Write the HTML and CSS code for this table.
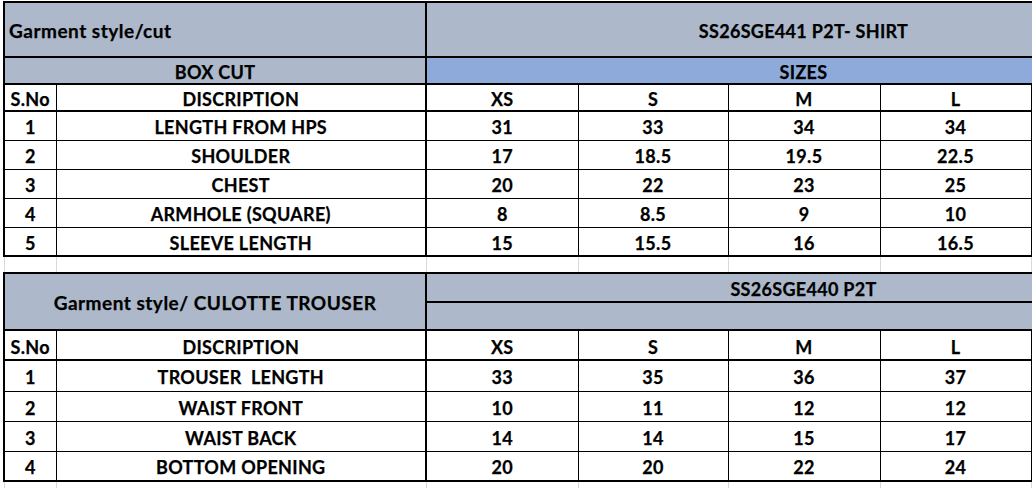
FILE: index.html
```html
<!DOCTYPE html>
<html lang="en">
<head>
<meta charset="utf-8">
<title>Garment measurement sheet</title>
<link rel="stylesheet" href="styles.css">
</head>
<body>
<div class="sheet">
<table class="grid">
  <colgroup>
    <col class="c-sno"><col class="c-desc"><col class="c-xs"><col class="c-s"><col class="c-m"><col class="c-l"><col class="c-ext">
  </colgroup>
  <tbody>
    <tr class="r-title">
      <td colspan="2" class="hd left title">Garment style/cut</td>
      <td colspan="5" class="hd split">SS26SGE441 P2T- SHIRT</td>
    </tr>
    <tr class="r-sub">
      <td colspan="2" class="hd">BOX CUT</td>
      <td colspan="5" class="hd split sizes">SIZES</td>
    </tr>
    <tr class="r-col colhead">
      <td>S.No</td><td>DISCRIPTION</td><td class="split">XS</td><td>S</td><td>M</td><td>L</td><td class="ext"></td>
    </tr>
    <tr class="r-d1"><td>1</td><td>LENGTH FROM HPS</td><td class="split">31</td><td>33</td><td>34</td><td>34</td><td class="ext"></td></tr>
    <tr class="r-d1"><td>2</td><td>SHOULDER</td><td class="split">17</td><td>18.5</td><td>19.5</td><td>22.5</td><td class="ext"></td></tr>
    <tr class="r-d1"><td>3</td><td>CHEST</td><td class="split">20</td><td>22</td><td>23</td><td>25</td><td class="ext"></td></tr>
    <tr class="r-d1"><td>4</td><td>ARMHOLE (SQUARE)</td><td class="split">8</td><td>8.5</td><td>9</td><td>10</td><td class="ext"></td></tr>
    <tr class="r-d1 end"><td>5</td><td>SLEEVE LENGTH</td><td class="split">15</td><td>15.5</td><td>16</td><td>16.5</td><td class="ext"></td></tr>
    <tr class="r-gap gap"><td></td><td></td><td></td><td></td><td></td><td></td><td></td></tr>
    <tr class="r-t2a">
      <td colspan="2" rowspan="2" class="hd title">Garment style/ CULOTTE TROUSER</td>
      <td colspan="5" class="hd split">SS26SGE440 P2T</td>
    </tr>
    <tr class="r-t2b">
      <td colspan="5" class="hd split"></td>
    </tr>
    <tr class="r-d2 colhead">
      <td>S.No</td><td>DISCRIPTION</td><td class="split">XS</td><td>S</td><td>M</td><td>L</td><td class="ext"></td>
    </tr>
    <tr class="r-d2b"><td>1</td><td>TROUSER&nbsp; LENGTH</td><td class="split">33</td><td>35</td><td>36</td><td>37</td><td class="ext"></td></tr>
    <tr class="r-d2"><td>2</td><td>WAIST FRONT</td><td class="split">10</td><td>11</td><td>12</td><td>12</td><td class="ext"></td></tr>
    <tr class="r-d2"><td>3</td><td>WAIST BACK</td><td class="split">14</td><td>14</td><td>15</td><td>17</td><td class="ext"></td></tr>
    <tr class="r-d2 end"><td>4</td><td>BOTTOM OPENING</td><td class="split">20</td><td>20</td><td>22</td><td>24</td><td class="ext"></td></tr>
    <tr class="r-tail gap"><td></td><td></td><td></td><td></td><td></td><td></td><td></td></tr>
  </tbody>
</table>
</div>
</body>
</html>
```
FILE: styles.css
```css
html, body {
  margin: 0;
  padding: 0;
  background: #ffffff;
}

.sheet {
  width: 1032px;
  height: 488px;
  overflow: hidden;
  box-sizing: border-box;
  padding: 1px 0 0 3px;
  font-family: Lato, "Liberation Sans", Arial, sans-serif;
}

.grid {
  border-collapse: collapse;
  table-layout: fixed;
  width: 1177px;
}

.c-sno { width: 52px; }
.c-desc { width: 370px; }
.c-xs { width: 152px; }
.c-s { width: 150px; }
.c-m { width: 152px; }
.c-l { width: 151px; }
.c-ext { width: 150px; }

.grid td {
  border: 1px solid #000000;
  padding: 3px 0 0 0;
  text-align: center;
  vertical-align: middle;
  font-weight: 700;
  font-size: 18px;
  letter-spacing: 0.3px;
  line-height: 20px;
  color: #000000;
  -webkit-text-stroke: 0.25px #000000;
  white-space: nowrap;
  overflow: hidden;
}

.grid td:first-child {
  border-left-width: 2px;
}

.grid td.hd {
  background: #adb9ca;
  border-width: 2px;
}

.grid td.title {
  font-size: 19px;
  letter-spacing: 0.5px;
}

.grid td.sizes {
  background: #8eaadb;
}

.grid td.left {
  text-align: left;
  padding-left: 4px;
}

.grid td.split {
  border-left-width: 2px;
}

.grid .colhead td {
  border-bottom-width: 2px;
}

.grid .end td {
  border-bottom-width: 2px;
}

.grid td.ext {
  border-right: none;
}

.grid .gap td {
  border-top: none;
  border-bottom: none;
  border-left: 1px solid #d9d9d9;
  border-right: 1px solid #d9d9d9;
}

.r-title { height: 55px; }
.r-sub { height: 27px; }
.r-col { height: 27px; }
.r-d1 { height: 29px; }
.r-gap { height: 17px; }
.r-t2a { height: 29px; }
.r-t2b { height: 28px; }
.r-d2 { height: 30px; }
.r-d2b { height: 31px; }
.r-tail { height: 20px; }
```
